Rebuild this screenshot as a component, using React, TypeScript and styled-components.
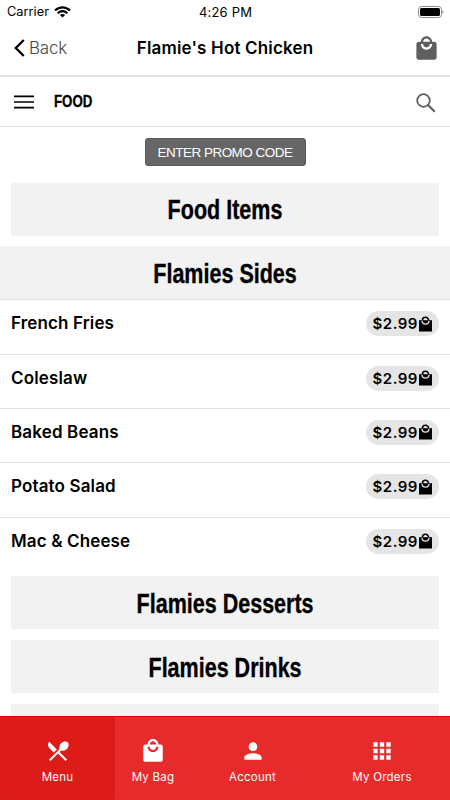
import React from 'react';
import styled, { createGlobalStyle } from 'styled-components';
import { MdApps, MdLocalMall, MdPerson, MdRestaurantMenu } from 'react-icons/md';

const GlobalStyle = createGlobalStyle`
  * { box-sizing: border-box; }
  body { margin: 0; background: #fff; color: #000; font-family: Inter, sans-serif; }
`;

const Screen = styled.div`
  width: 450px;
  height: 800px;
  overflow: hidden;
  display: flex;
  flex-direction: column;
  background: #fff;
`;

const StatusBar = styled.div`
  height: 22px;
  flex: none;
  display: grid;
  grid-template-columns: 1fr auto 1fr;
  align-items: center;
  padding: 1px 6px 0 7px;
  font-size: 13px;
  line-height: 20px;
`;

const Carrier = styled.div`
  display: flex;
  align-items: center;
  gap: 5px;
  font-size: 12.8px;
`;

const Clock = styled.div`
  letter-spacing: 0.2px;
`;

const Battery = styled.svg`
  justify-self: end;
`;

const NavBar = styled.header`
  height: 55px;
  flex: none;
  display: grid;
  grid-template-columns: 1fr auto 1fr;
  align-items: center;
  padding: 0 10px 2px 14px;
  border-bottom: 2px solid #e2e2e2;
`;

const BackButton = styled.button`
  display: flex;
  align-items: center;
  gap: 4px;
  padding: 0;
  border: 0;
  background: none;
  color: #484848;
  font: 300 17px/22px Inter, sans-serif;
  letter-spacing: -0.2px;
`;

const Title = styled.h1`
  margin: 0 0 0 -4px;
  font-size: 17px;
  line-height: 22px;
  font-weight: 600;
  letter-spacing: 0.17px;
`;

const IconButton = styled.button`
  justify-self: end;
  margin-left: auto;
  display: flex;
  padding: 2px 0 0;
  border: 0;
  background: none;
  color: #5f5f5f;
`;

const SubBar = styled.div`
  height: 50px;
  flex: none;
  display: flex;
  align-items: center;
  padding: 0 14px 0 14px;
  border-bottom: 1px solid #dfdfdf;
`;

const Condensed = styled.span<{ $size: number; $scale: number }>`
  display: inline-block;
  font-family: "Liberation Sans", sans-serif;
  font-weight: 700;
  font-size: ${(p) => p.$size}px;
  line-height: 1.2;
  white-space: nowrap;
  transform: scaleX(${(p) => p.$scale});
  -webkit-text-stroke: 0.35px #000;
`;

const Category = styled(Condensed)`
  margin: 2px 0 0 20px;
  transform-origin: left;
`;

const Content = styled.main`
  flex: 1;
  min-height: 0;
  overflow: hidden;
  display: flex;
  flex-direction: column;
  padding-top: 11px;
`;

const PromoButton = styled.button`
  flex: none;
  align-self: center;
  width: 161px;
  height: 28px;
  margin-bottom: 16.5px;
  padding: 1px 0 0;
  border: 1px solid #5a5a5a;
  border-radius: 3px;
  background: #666;
  color: #fff;
  font: 400 13.5px/25px "Liberation Sans", sans-serif;
  letter-spacing: -0.53px;
  white-space: nowrap;
`;

const Panel = styled.h2<{ $open?: boolean }>`
  flex: none;
  height: 53px;
  margin: ${(p) => (p.$open ? '0' : '0 11px 10.8px')};
  display: flex;
  align-items: center;
  justify-content: center;
  padding-top: 3px;
  background: #f2f2f2;
`;

const ItemList = styled.ul`
  flex: none;
  list-style: none;
  margin: 0 0 5px;
  padding: 0;
`;

const Item = styled.li`
  height: 54.35px;
  display: flex;
  align-items: flex-start;
  justify-content: space-between;
  padding: 11px 11px 0;
  border-top: 1px solid #e3e3e3;
  font-size: 17px;
  font-weight: 600;
  line-height: 25px;
  letter-spacing: 0.14px;
`;

const Price = styled.span`
  width: 73px;
  height: 25px;
  display: flex;
  align-items: center;
  justify-content: center;
  gap: 1.5px;
  border-radius: 13px;
  background: #e5e5e5;
  font-size: 15px;
  letter-spacing: 0.5px;
`;

const TabBar = styled.nav`
  flex: none;
  height: 84px;
  display: grid;
  grid-template-columns: 115px 76px 123px 136px;
  border-top: 1px solid #e60000;
  background: #e72b2a;
`;

const Tab = styled.button<{ $active?: boolean }>`
  display: flex;
  flex-direction: column;
  align-items: center;
  padding: 21px 0 0;
  border: 0;
  border-radius: 3px;
  background: ${(p) => (p.$active ? '#dd1b19' : 'transparent')};
  color: #fff;
  font: 400 11.5px/16px Inter, sans-serif;
  letter-spacing: 0.25px;
  gap: 5px;
`;

const items = ['French Fries', 'Coleslaw', 'Baked Beans', 'Potato Salad', 'Mac & Cheese'];

const MenuLines = () => (
  <svg width="20" height="14" viewBox="0 0 20 14" stroke="#000" strokeWidth="1.7">
    <path d="M0 1.3h20M0 7h20M0 12.7h20" />
  </svg>
);

const SearchGlass = () => (
  <svg width="20" height="20" viewBox="0 0 20 20" fill="none" stroke="#5f5f5f" strokeWidth="1.8">
    <circle cx="7.5" cy="7.5" r="6.3" />
    <path d="m12 12 6.8 6.8" strokeWidth="2.1" />
  </svg>
);

const SquareBag = () => (
  <svg width="13" height="16" viewBox="0 0 13 16" fill="none">
    <path d="M0 4.2h13v11.3H0z" fill="#000" />
    <path d="M3.4 4.4a3.1 3.1 0 0 1 6.2 0" stroke="#000" strokeWidth="1.6" />
    <path d="M3 4.8a3.5 3.3 0 0 0 7 0" stroke="#e5e5e5" strokeWidth="1.3" />
  </svg>
);

const Heading = ({ text, open }: { text: string; open?: boolean }) => (
  <Panel $open={open}>
    <Condensed $size={27} $scale={0.797}>{text}</Condensed>
  </Panel>
);

export default function App() {
  return (
    <>
      <GlobalStyle />
      <Screen>
        <StatusBar>
          <Carrier>
            Carrier
            <svg width="17" height="12" viewBox="0 0 17 12" fill="none" stroke="#000" strokeWidth="2.2">
              <path d="M1 4.5C5.2.2 11.8.2 16 4.5M3.7 7.2c2.7-2.7 6.9-2.7 9.6 0" />
              <path d="M8.5 11.6 5.9 9c1.4-1.4 3.8-1.4 5.2 0z" fill="#000" stroke="none" />
            </svg>
          </Carrier>
          <Clock>4:26 PM</Clock>
          <Battery width="26" height="12" viewBox="0 0 26 12">
            <rect x=".5" y=".5" width="23" height="11" rx="3" fill="none" stroke="#888" />
            <rect x="2" y="2" width="20" height="8" rx="1.5" />
            <path d="M24.6 4.2c1.4.6 1.4 3 0 3.6z" fill="#777" />
          </Battery>
        </StatusBar>
        <NavBar>
          <BackButton>
            <svg width="11" height="18" viewBox="0 0 11 18" fill="none" stroke="#000" strokeWidth="2.3">
              <path d="m9.8 1-8 8 8 8" />
            </svg>
            Back
          </BackButton>
          <Title>Flamie's Hot Chicken</Title>
          <IconButton aria-label="Bag"><MdLocalMall size={27} /></IconButton>
        </NavBar>
        <SubBar>
          <MenuLines />
          <Category $size={17} $scale={0.78}>FOOD</Category>
          <IconButton aria-label="Search"><SearchGlass /></IconButton>
        </SubBar>
        <Content>
          <PromoButton>ENTER PROMO CODE</PromoButton>
          <Heading text="Food Items" />
          <Heading text="Flamies Sides" open />
          <ItemList>
            {items.map((name) => (
              <Item key={name}>
                <span>{name}</span>
                <Price>$2.99<SquareBag /></Price>
              </Item>
            ))}
          </ItemList>
          <Heading text="Flamies Desserts" />
          <Heading text="Flamies Drinks" />
          <Panel />
        </Content>
        <TabBar>
          <Tab $active><MdRestaurantMenu size={26} />Menu</Tab>
          <Tab><MdLocalMall size={26} />My Bag</Tab>
          <Tab><MdPerson size={26} />Account</Tab>
          <Tab><MdApps size={26} />My Orders</Tab>
        </TabBar>
      </Screen>
    </>
  );
}
